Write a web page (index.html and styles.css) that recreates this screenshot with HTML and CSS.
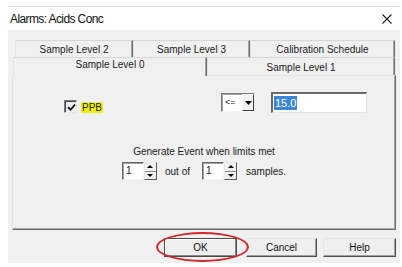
FILE: index.html
```html
<!DOCTYPE html>
<html>
<head>
<meta charset="utf-8">
<link rel="stylesheet" href="styles.css">
</head>
<body>
<div class="window">
  <div class="titlebar">
    <span class="title">Alarms: Acids Conc</span>
    <svg class="close" width="10" height="10" viewBox="0 0 10 10"><path d="M0.5 0.5 L9.5 9.5 M9.5 0.5 L0.5 9.5" stroke="#222" stroke-width="1.1" fill="none"/></svg>
  </div>
  <div class="body">
    <div class="tabs">
      <div class="tabrow back">
        <div class="tab t2">Sample Level 2</div>
        <div class="tab t3">Sample Level 3</div>
        <div class="tab tc">Calibration Schedule</div>
      </div>
      <div class="tabrow front">
        <div class="tab active t0">Sample Level 0</div>
        <div class="tab t1">Sample Level 1</div>
      </div>
    </div>
    <div class="panel">
      <div class="limit-row">
        <div class="check">
          <span class="checkbox"><svg width="9" height="9" viewBox="0 0 9 9"><path d="M1 4.2 L3.5 6.8 L8 1.6" stroke="#000" stroke-width="1.7" fill="none"/></svg></span>
          <span class="ppb">PPB</span>
        </div>
        <div class="limit-inputs">
          <div class="combo">
            <span class="combo-text">&lt;=</span>
            <span class="combo-btn"><svg width="7" height="4" viewBox="0 0 7 4"><path d="M0 0 H7 L3.5 4 Z" fill="#000"/></svg></span>
          </div>
          <div class="textbox"><span class="sel">15.0</span></div>
        </div>
      </div>
      <div class="event-label">Generate Event when limits met</div>
      <div class="event-row">
        <div class="spin"><span class="spin-field">1</span><span class="spin-btns"><span class="spin-up"></span><span class="spin-down"></span></span></div>
        <span class="out">out of</span>
        <div class="spin"><span class="spin-field">1</span><span class="spin-btns"><span class="spin-up"></span><span class="spin-down"></span></span></div>
        <span class="samples">samples.</span>
      </div>
    </div>
    <div class="buttons">
      <div class="btn-wrap">
        <button class="btn default">OK</button>
        <span class="ring"></span>
      </div>
      <button class="btn cancel">Cancel</button>
      <button class="btn help">Help</button>
    </div>
  </div>
</div>
</body>
</html>
```
FILE: styles.css
```css
* { box-sizing: border-box; }
body {
  margin: 0;
  background: #fff;
  font-family: "Liberation Sans", Arial, sans-serif;
  font-size: 10px;
  color: #1a1a1a;
}
.window {
  margin: 6px 0 0 8px;
  width: 392px;
  border-top: 1px solid #dedede;
}
.titlebar {
  height: 23px;
  background: #fff;
  display: flex;
  align-items: center;
  justify-content: space-between;
  padding: 0 8px 0 2px;
}
.title {
  font-size: 12px;
  letter-spacing: -0.6px;
  color: #111;
}
.body {
  background: #f0f0f0;
  padding: 10px 4px 6px 4px;
}
.tabrow { display: flex; }
.back { margin-left: 3px; height: 17px; }
.front { margin-left: 1px; height: 18px; }
.tab {
  display: flex;
  align-items: center;
  justify-content: center;
  background: #f0f0f0;
  border-top: 1px solid #d6d6d6;
  border-left: 1px solid #e4e4e4;
  border-right: 1px solid #6a6a6a;
  box-shadow: inset -1px 0 #a6a6a6;
  color: #1a1a1a;
  white-space: nowrap;
}
.t2 { width: 118px; }
.t3 { width: 117px; }
.tc { width: 145px; }
.t0 { width: 194px; }
.t1 { width: 188px; padding-top: 2px; }
.active {
  position: relative;
  z-index: 1;
  height: 19px;
  margin-bottom: -1px;
  align-items: flex-start;
  padding-top: 1px;
}
.panel {
  height: 155px;
  border-top: 1px solid #e2e2e2;
  border-left: 1px solid #e2e2e2;
  border-right: 1px solid #6a6a6a;
  border-bottom: 1px solid #6a6a6a;
  box-shadow: inset -1px -1px #a6a6a6;
}
.limit-row {
  display: flex;
  align-items: center;
  justify-content: space-between;
  margin-top: 16px;
  height: 21px;
  padding: 0 28px 0 51px;
}
.check {
  align-self: flex-end;
  display: flex;
  align-items: flex-end;
  gap: 4px;
}
.checkbox {
  width: 13px;
  height: 13px;
  background: #ececec;
  border: 1px solid;
  border-color: #7a7a7a #e6e6e6 #e6e6e6 #7a7a7a;
  box-shadow: inset 1px 1px #454545;
  display: flex;
  align-items: center;
  justify-content: center;
  padding: 1px 0 0 1px;
}
.ppb {
  background: #f0ee12;
  padding: 0 1px;
  height: 11px;
  line-height: 11px;
  color: #222;
}
.limit-inputs {
  display: flex;
  align-items: center;
  gap: 16px;
}
.combo {
  width: 34px;
  height: 19px;
  display: flex;
  background: #fff;
  border: 1px solid;
  border-color: #7a7a7a #f4f4f4 #f4f4f4 #7a7a7a;
  box-shadow: inset 1px 1px #a0a0a0;
}
.combo-text {
  flex: 1;
  padding-left: 3px;
  line-height: 17px;
  font-size: 9px;
}
.combo-btn {
  width: 12px;
  background: #f0f0f0;
  border: 1px solid;
  border-color: #fff #3c3c3c #3c3c3c #fff;
  display: flex;
  align-items: center;
  justify-content: center;
}
.textbox {
  width: 96px;
  height: 21px;
  background: #fff;
  border-style: solid;
  border-width: 2px 1px 1px 2px;
  border-color: #6a6a6a #e4e4e4 #e4e4e4 #6a6a6a;
  padding-left: 1px;
  display: flex;
  align-items: center;
}
.sel {
  background: #3c84d6;
  color: #fff;
  padding: 0 1px;
  line-height: 14px;
  font-size: 11px;
}
.event-label {
  text-align: center;
  margin-top: 33px;
  line-height: 12px;
}
.event-row {
  display: flex;
  justify-content: center;
  align-items: center;
  margin-top: 4px;
}
.out { margin: 0 12px 0 8px; }
.samples { margin-left: 9px; }
.spin {
  display: flex;
  height: 18px;
  width: 35px;
}
.spin-field {
  width: 22px;
  background: #fff;
  border: 1px solid;
  border-color: #6a6a6a #f4f4f4 #f4f4f4 #6a6a6a;
  box-shadow: inset 1px 1px #a0a0a0;
  padding-left: 3px;
  line-height: 16px;
}
.spin-btns {
  width: 13px;
  display: flex;
  flex-direction: column;
  border: 1px solid;
  border-color: #e8e8e8 #5a5a5a #5a5a5a #e8e8e8;
  background: #f0f0f0;
}
.spin-up, .spin-down {
  flex: 1;
  display: flex;
  align-items: center;
  justify-content: center;
}
.spin-up { border-bottom: 1px solid #8a8a8a; }
.spin-up::before {
  content: "";
  border-left: 3px solid transparent;
  border-right: 3px solid transparent;
  border-bottom: 3px solid #000;
}
.spin-down::before {
  content: "";
  border-left: 3px solid transparent;
  border-right: 3px solid transparent;
  border-top: 3px solid #000;
}
.buttons {
  display: flex;
  justify-content: flex-end;
  margin-top: 8px;
  height: 19px;
}
.btn-wrap {
  position: relative;
  display: flex;
}
.btn {
  height: 19px;
  width: 73px;
  padding: 0;
  font-family: "Liberation Sans", Arial, sans-serif;
  font-size: 10px;
  color: #111;
  background: #efefef;
  border: 1px solid;
  border-color: #e6e6e6 #505050 #505050 #e6e6e6;
  box-shadow: inset -1px -1px #a0a0a0;
}
.default {
  border-color: #4a4a4a;
  box-shadow: inset -1px -1px #8a8a8a, inset 1px 1px #fff;
}
.cancel { width: 71px; margin-left: 9px; }
.help { margin-left: 6px; }
.ring {
  position: absolute;
  left: -8px;
  top: -6px;
  width: 93px;
  height: 30px;
  border: 2.5px solid #d2282c;
  border-radius: 50%;
  pointer-events: none;
}
```
